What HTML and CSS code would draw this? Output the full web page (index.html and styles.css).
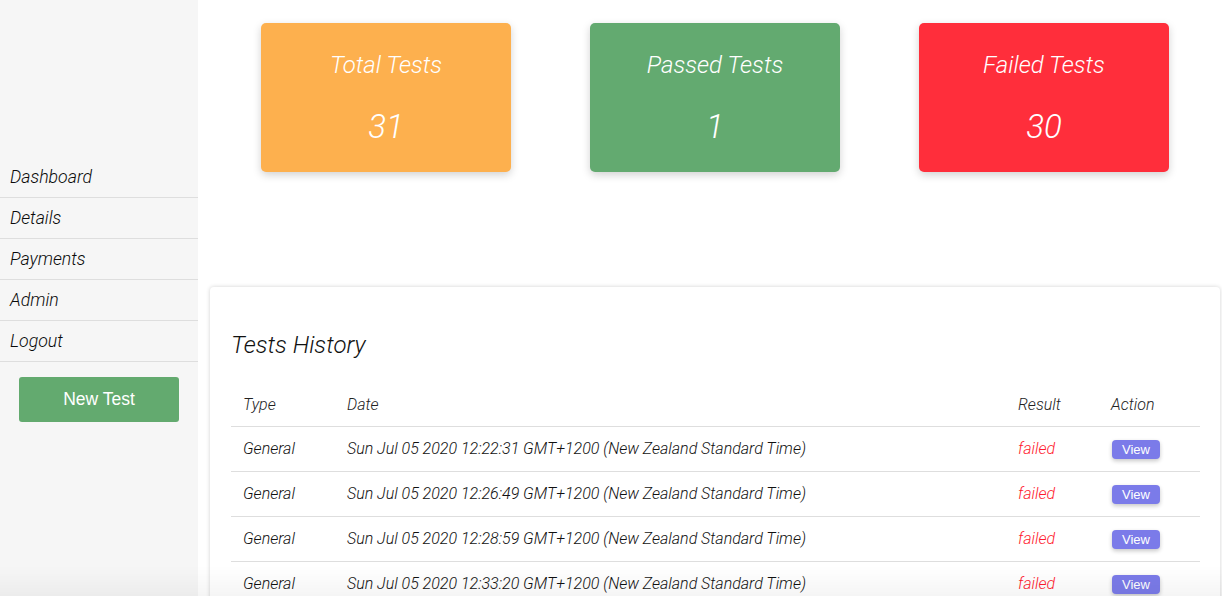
FILE: index.html
```html
<!DOCTYPE html>
<html>
<head>
<meta charset="utf-8">
<link rel="stylesheet" href="styles.css">
</head>
<body>
<div class="app">
  <aside class="sidebar">
    <nav class="nav">
      <a class="nav-item">Dashboard</a>
      <a class="nav-item">Details</a>
      <a class="nav-item">Payments</a>
      <a class="nav-item">Admin</a>
      <a class="nav-item">Logout</a>
    </nav>
    <div class="btn-wrap"><button class="new-test">New Test</button></div>
  </aside>
  <main class="main">
    <section class="stats">
      <div class="stat stat-total"><div class="stat-title">Total Tests</div><div class="stat-num">31</div></div>
      <div class="stat stat-passed"><div class="stat-title">Passed Tests</div><div class="stat-num">1</div></div>
      <div class="stat stat-failed"><div class="stat-title">Failed Tests</div><div class="stat-num">30</div></div>
    </section>
    <section class="history">
      <h2 class="history-title">Tests History</h2>
      <table class="table">
        <thead>
          <tr><th class="c-type">Type</th><th class="c-date">Date</th><th class="c-result">Result</th><th class="c-action">Action</th></tr>
        </thead>
        <tbody>
          <tr><td>General</td><td>Sun Jul 05 2020 12:22:31 GMT+1200 (New Zealand Standard Time)</td><td class="failed">failed</td><td><button class="view">View</button></td></tr>
          <tr><td>General</td><td>Sun Jul 05 2020 12:26:49 GMT+1200 (New Zealand Standard Time)</td><td class="failed">failed</td><td><button class="view">View</button></td></tr>
          <tr><td>General</td><td>Sun Jul 05 2020 12:28:59 GMT+1200 (New Zealand Standard Time)</td><td class="failed">failed</td><td><button class="view">View</button></td></tr>
          <tr><td>General</td><td>Sun Jul 05 2020 12:33:20 GMT+1200 (New Zealand Standard Time)</td><td class="failed">failed</td><td><button class="view">View</button></td></tr>
        </tbody>
      </table>
    </section>
  </main>
</div>
<div class="bottom-fade"></div>
</body>
</html>
```
FILE: styles.css
```css
html, body {
  margin: 0;
  padding: 0;
  height: 100%;
  overflow: hidden;
  background: #fff;
  font-family: Roboto, "Liberation Sans", sans-serif;
  font-weight: 300;
  font-style: italic;
  color: #111;
}
.app {
  display: flex;
  height: 596px;
}
.sidebar {
  width: 198px;
  flex: 0 0 198px;
  background: #f6f6f6;
  padding-top: 157px;
  box-sizing: border-box;
}
.nav {
  display: flex;
  flex-direction: column;
}
.nav-item {
  display: block;
  height: 40px;
  line-height: 40px;
  padding-left: 10px;
  font-size: 17.7px;
  border-bottom: 1px solid #dedede;
  color: #0a0a0a;
}
.btn-wrap {
  padding: 15px 19px 0 19px;
}
.new-test {
  width: 160px;
  height: 45px;
  background: #63aa6f;
  border: none;
  border-radius: 3px;
  color: #fff;
  font-family: "Liberation Sans", Arial, sans-serif;
  font-style: normal;
  font-weight: 400;
  font-size: 17.5px;
}
.main {
  flex: 1;
  display: flex;
  flex-direction: column;
}
.stats {
  display: flex;
  gap: 79px;
  padding: 23px 0 0 63px;
  height: 287px;
  flex: 0 0 287px;
  box-sizing: border-box;
}
.stat {
  width: 250px;
  height: 149px;
  border-radius: 5px;
  color: #fff;
  text-align: center;
  box-shadow: 0 3px 8px rgba(0,0,0,0.18);
}
.stat-total { background: #fdb04e; }
.stat-passed { background: #63aa70; }
.stat-failed { background: #ff2e3b; }
.stat-title {
  font-size: 24px;
  padding-top: 27px;
  line-height: 30px;
}
.stat-num {
  font-size: 33px;
  line-height: 40px;
  padding-top: 27px;
}
.history {
  margin-left: 12px;
  margin-right: 2px;
  background: #fff;
  border-radius: 4px;
  box-shadow: 0 0 4px rgba(0,0,0,0.18);
  padding: 0 20px 0 21px;
  flex: 1;
}
.history-title {
  font-size: 24px;
  font-weight: 300;
  font-style: italic;
  margin: 0;
  padding-top: 43px;
  line-height: 30px;
  height: 52px;
  color: #111;
}
.table {
  width: 100%;
  border-collapse: collapse;
  font-size: 16px;
}
.table th {
  font-weight: 300;
  text-align: left;
  height: 43px;
  padding: 1px 12px 0 12px;
  border-bottom: 1px solid #dedede;
  vertical-align: middle;
  color: #222;
}
.table td {
  height: 43px;
  padding: 0 12px 1px 12px;
  border-bottom: 1px solid #dedede;
  vertical-align: middle;
  color: #111;
}
.c-type { width: 80px; }
.c-result { width: 69px; }
.c-action { width: 77px; }
.table td.failed { color: #ff1a2e; }
.view {
  background: #7b7be9;
  color: #fff;
  border: none;
  border-radius: 4px;
  font-family: "Liberation Sans", Arial, sans-serif;
  font-style: normal;
  font-size: 13px;
  width: 48px;
  height: 19px;
  padding: 0;
  margin-left: 1px;
  box-shadow: 0 2px 4px rgba(0,0,0,0.22);
}
.bottom-fade {
  position: fixed;
  left: 0;
  right: 0;
  bottom: 0;
  height: 30px;
  background: linear-gradient(to bottom, rgba(0,0,0,0), rgba(0,0,0,0.04));
  pointer-events: none;
}
```
